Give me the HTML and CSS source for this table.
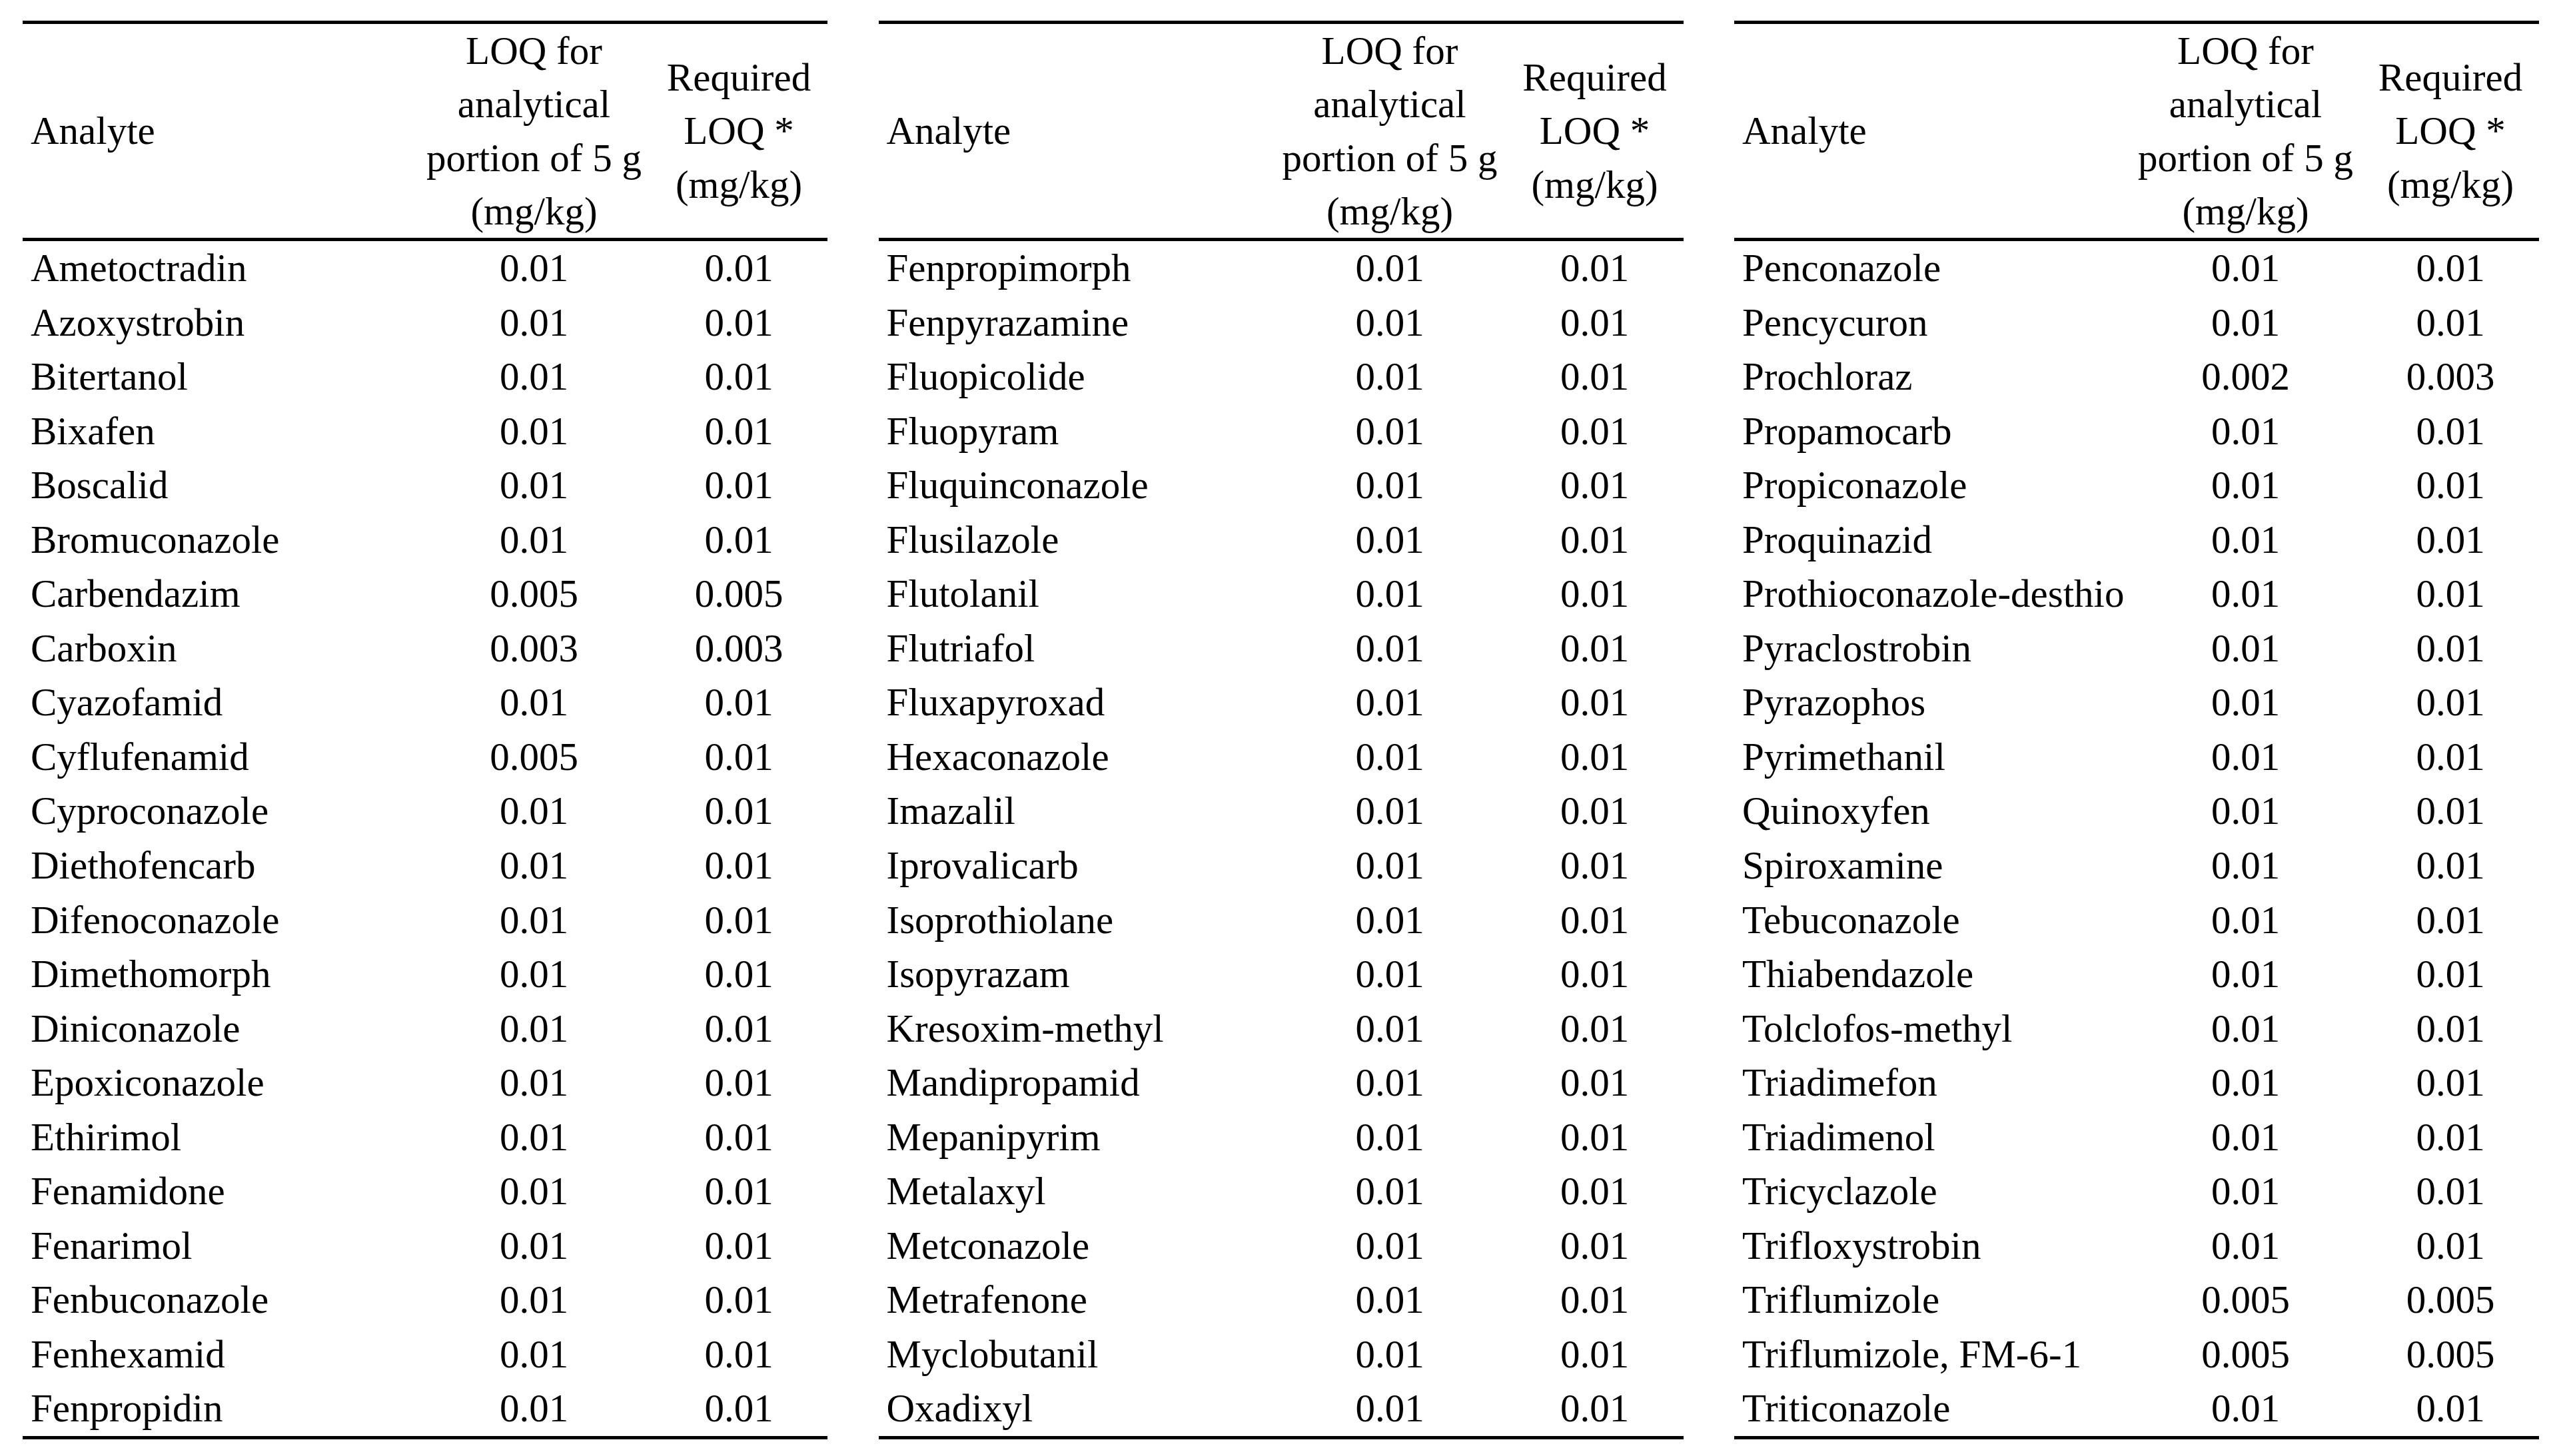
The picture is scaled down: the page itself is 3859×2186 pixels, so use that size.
FILE: index.html
```html
<!DOCTYPE html>
<html lang="en">
<head>
<meta charset="utf-8">
<title>LOQ table</title>
<link rel="stylesheet" href="styles.css">
</head>
<body>
<div class="page">
  <table class="loq">
    <colgroup><col class="c-name"><col class="c-loq"><col class="c-req"></colgroup>
    <thead>
      <tr><th class="name">Analyte</th><th>LOQ for<br>analytical<br>portion of 5 g<br>(mg/kg)</th><th>Required<br>LOQ *<br>(mg/kg)</th></tr>
    </thead>
    <tbody>
      <tr><td class="name">Ametoctradin</td><td>0.01</td><td>0.01</td></tr>
      <tr><td class="name">Azoxystrobin</td><td>0.01</td><td>0.01</td></tr>
      <tr><td class="name">Bitertanol</td><td>0.01</td><td>0.01</td></tr>
      <tr><td class="name">Bixafen</td><td>0.01</td><td>0.01</td></tr>
      <tr><td class="name">Boscalid</td><td>0.01</td><td>0.01</td></tr>
      <tr><td class="name">Bromuconazole</td><td>0.01</td><td>0.01</td></tr>
      <tr><td class="name">Carbendazim</td><td>0.005</td><td>0.005</td></tr>
      <tr><td class="name">Carboxin</td><td>0.003</td><td>0.003</td></tr>
      <tr><td class="name">Cyazofamid</td><td>0.01</td><td>0.01</td></tr>
      <tr><td class="name">Cyflufenamid</td><td>0.005</td><td>0.01</td></tr>
      <tr><td class="name">Cyproconazole</td><td>0.01</td><td>0.01</td></tr>
      <tr><td class="name">Diethofencarb</td><td>0.01</td><td>0.01</td></tr>
      <tr><td class="name">Difenoconazole</td><td>0.01</td><td>0.01</td></tr>
      <tr><td class="name">Dimethomorph</td><td>0.01</td><td>0.01</td></tr>
      <tr><td class="name">Diniconazole</td><td>0.01</td><td>0.01</td></tr>
      <tr><td class="name">Epoxiconazole</td><td>0.01</td><td>0.01</td></tr>
      <tr><td class="name">Ethirimol</td><td>0.01</td><td>0.01</td></tr>
      <tr><td class="name">Fenamidone</td><td>0.01</td><td>0.01</td></tr>
      <tr><td class="name">Fenarimol</td><td>0.01</td><td>0.01</td></tr>
      <tr><td class="name">Fenbuconazole</td><td>0.01</td><td>0.01</td></tr>
      <tr><td class="name">Fenhexamid</td><td>0.01</td><td>0.01</td></tr>
      <tr><td class="name">Fenpropidin</td><td>0.01</td><td>0.01</td></tr>
    </tbody>
  </table>

  <table class="loq">
    <colgroup><col class="c-name"><col class="c-loq"><col class="c-req"></colgroup>
    <thead>
      <tr><th class="name">Analyte</th><th>LOQ for<br>analytical<br>portion of 5 g<br>(mg/kg)</th><th>Required<br>LOQ *<br>(mg/kg)</th></tr>
    </thead>
    <tbody>
      <tr><td class="name">Fenpropimorph</td><td>0.01</td><td>0.01</td></tr>
      <tr><td class="name">Fenpyrazamine</td><td>0.01</td><td>0.01</td></tr>
      <tr><td class="name">Fluopicolide</td><td>0.01</td><td>0.01</td></tr>
      <tr><td class="name">Fluopyram</td><td>0.01</td><td>0.01</td></tr>
      <tr><td class="name">Fluquinconazole</td><td>0.01</td><td>0.01</td></tr>
      <tr><td class="name">Flusilazole</td><td>0.01</td><td>0.01</td></tr>
      <tr><td class="name">Flutolanil</td><td>0.01</td><td>0.01</td></tr>
      <tr><td class="name">Flutriafol</td><td>0.01</td><td>0.01</td></tr>
      <tr><td class="name">Fluxapyroxad</td><td>0.01</td><td>0.01</td></tr>
      <tr><td class="name">Hexaconazole</td><td>0.01</td><td>0.01</td></tr>
      <tr><td class="name">Imazalil</td><td>0.01</td><td>0.01</td></tr>
      <tr><td class="name">Iprovalicarb</td><td>0.01</td><td>0.01</td></tr>
      <tr><td class="name">Isoprothiolane</td><td>0.01</td><td>0.01</td></tr>
      <tr><td class="name">Isopyrazam</td><td>0.01</td><td>0.01</td></tr>
      <tr><td class="name">Kresoxim-methyl</td><td>0.01</td><td>0.01</td></tr>
      <tr><td class="name">Mandipropamid</td><td>0.01</td><td>0.01</td></tr>
      <tr><td class="name">Mepanipyrim</td><td>0.01</td><td>0.01</td></tr>
      <tr><td class="name">Metalaxyl</td><td>0.01</td><td>0.01</td></tr>
      <tr><td class="name">Metconazole</td><td>0.01</td><td>0.01</td></tr>
      <tr><td class="name">Metrafenone</td><td>0.01</td><td>0.01</td></tr>
      <tr><td class="name">Myclobutanil</td><td>0.01</td><td>0.01</td></tr>
      <tr><td class="name">Oxadixyl</td><td>0.01</td><td>0.01</td></tr>
    </tbody>
  </table>

  <table class="loq">
    <colgroup><col class="c-name"><col class="c-loq"><col class="c-req"></colgroup>
    <thead>
      <tr><th class="name">Analyte</th><th>LOQ for<br>analytical<br>portion of 5 g<br>(mg/kg)</th><th>Required<br>LOQ *<br>(mg/kg)</th></tr>
    </thead>
    <tbody>
      <tr><td class="name">Penconazole</td><td>0.01</td><td>0.01</td></tr>
      <tr><td class="name">Pencycuron</td><td>0.01</td><td>0.01</td></tr>
      <tr><td class="name">Prochloraz</td><td>0.002</td><td>0.003</td></tr>
      <tr><td class="name">Propamocarb</td><td>0.01</td><td>0.01</td></tr>
      <tr><td class="name">Propiconazole</td><td>0.01</td><td>0.01</td></tr>
      <tr><td class="name">Proquinazid</td><td>0.01</td><td>0.01</td></tr>
      <tr><td class="name">Prothioconazole-desthio</td><td>0.01</td><td>0.01</td></tr>
      <tr><td class="name">Pyraclostrobin</td><td>0.01</td><td>0.01</td></tr>
      <tr><td class="name">Pyrazophos</td><td>0.01</td><td>0.01</td></tr>
      <tr><td class="name">Pyrimethanil</td><td>0.01</td><td>0.01</td></tr>
      <tr><td class="name">Quinoxyfen</td><td>0.01</td><td>0.01</td></tr>
      <tr><td class="name">Spiroxamine</td><td>0.01</td><td>0.01</td></tr>
      <tr><td class="name">Tebuconazole</td><td>0.01</td><td>0.01</td></tr>
      <tr><td class="name">Thiabendazole</td><td>0.01</td><td>0.01</td></tr>
      <tr><td class="name">Tolclofos-methyl</td><td>0.01</td><td>0.01</td></tr>
      <tr><td class="name">Triadimefon</td><td>0.01</td><td>0.01</td></tr>
      <tr><td class="name">Triadimenol</td><td>0.01</td><td>0.01</td></tr>
      <tr><td class="name">Tricyclazole</td><td>0.01</td><td>0.01</td></tr>
      <tr><td class="name">Trifloxystrobin</td><td>0.01</td><td>0.01</td></tr>
      <tr><td class="name">Triflumizole</td><td>0.005</td><td>0.005</td></tr>
      <tr><td class="name">Triflumizole, FM-6-1</td><td>0.005</td><td>0.005</td></tr>
      <tr><td class="name">Triticonazole</td><td>0.01</td><td>0.01</td></tr>
    </tbody>
  </table>
</div>
</body>
</html>
```

FILE: styles.css
```css
html, body {
  margin: 0;
  padding: 0;
  background: #ffffff;
}

.page {
  display: flex;
  align-items: flex-start;
  gap: 76.5px;
  padding: 31px 0 0 34px;
  font-family: "Liberation Serif", "Times New Roman", serif;
  font-size: 59px;
  color: #000000;
}

.loq {
  width: 1208px;
  table-layout: fixed;
  border-collapse: separate;
  border-spacing: 0;
  border-top: 5px solid #000;
  border-bottom: 5px solid #000;
}

.c-name { width: 593px; }
.c-loq { width: 349px; }
.c-req { width: 266px; }

.loq th,
.loq td {
  padding: 0;
  font-weight: normal;
  text-align: center;
  white-space: nowrap;
}

.loq th {
  line-height: 80.25px;
  vertical-align: middle;
  border-bottom: 5px solid #000;
}

.loq td {
  line-height: 81.55px;
  vertical-align: middle;
}

.loq .name {
  text-align: left;
  padding-left: 12px;
}
```
